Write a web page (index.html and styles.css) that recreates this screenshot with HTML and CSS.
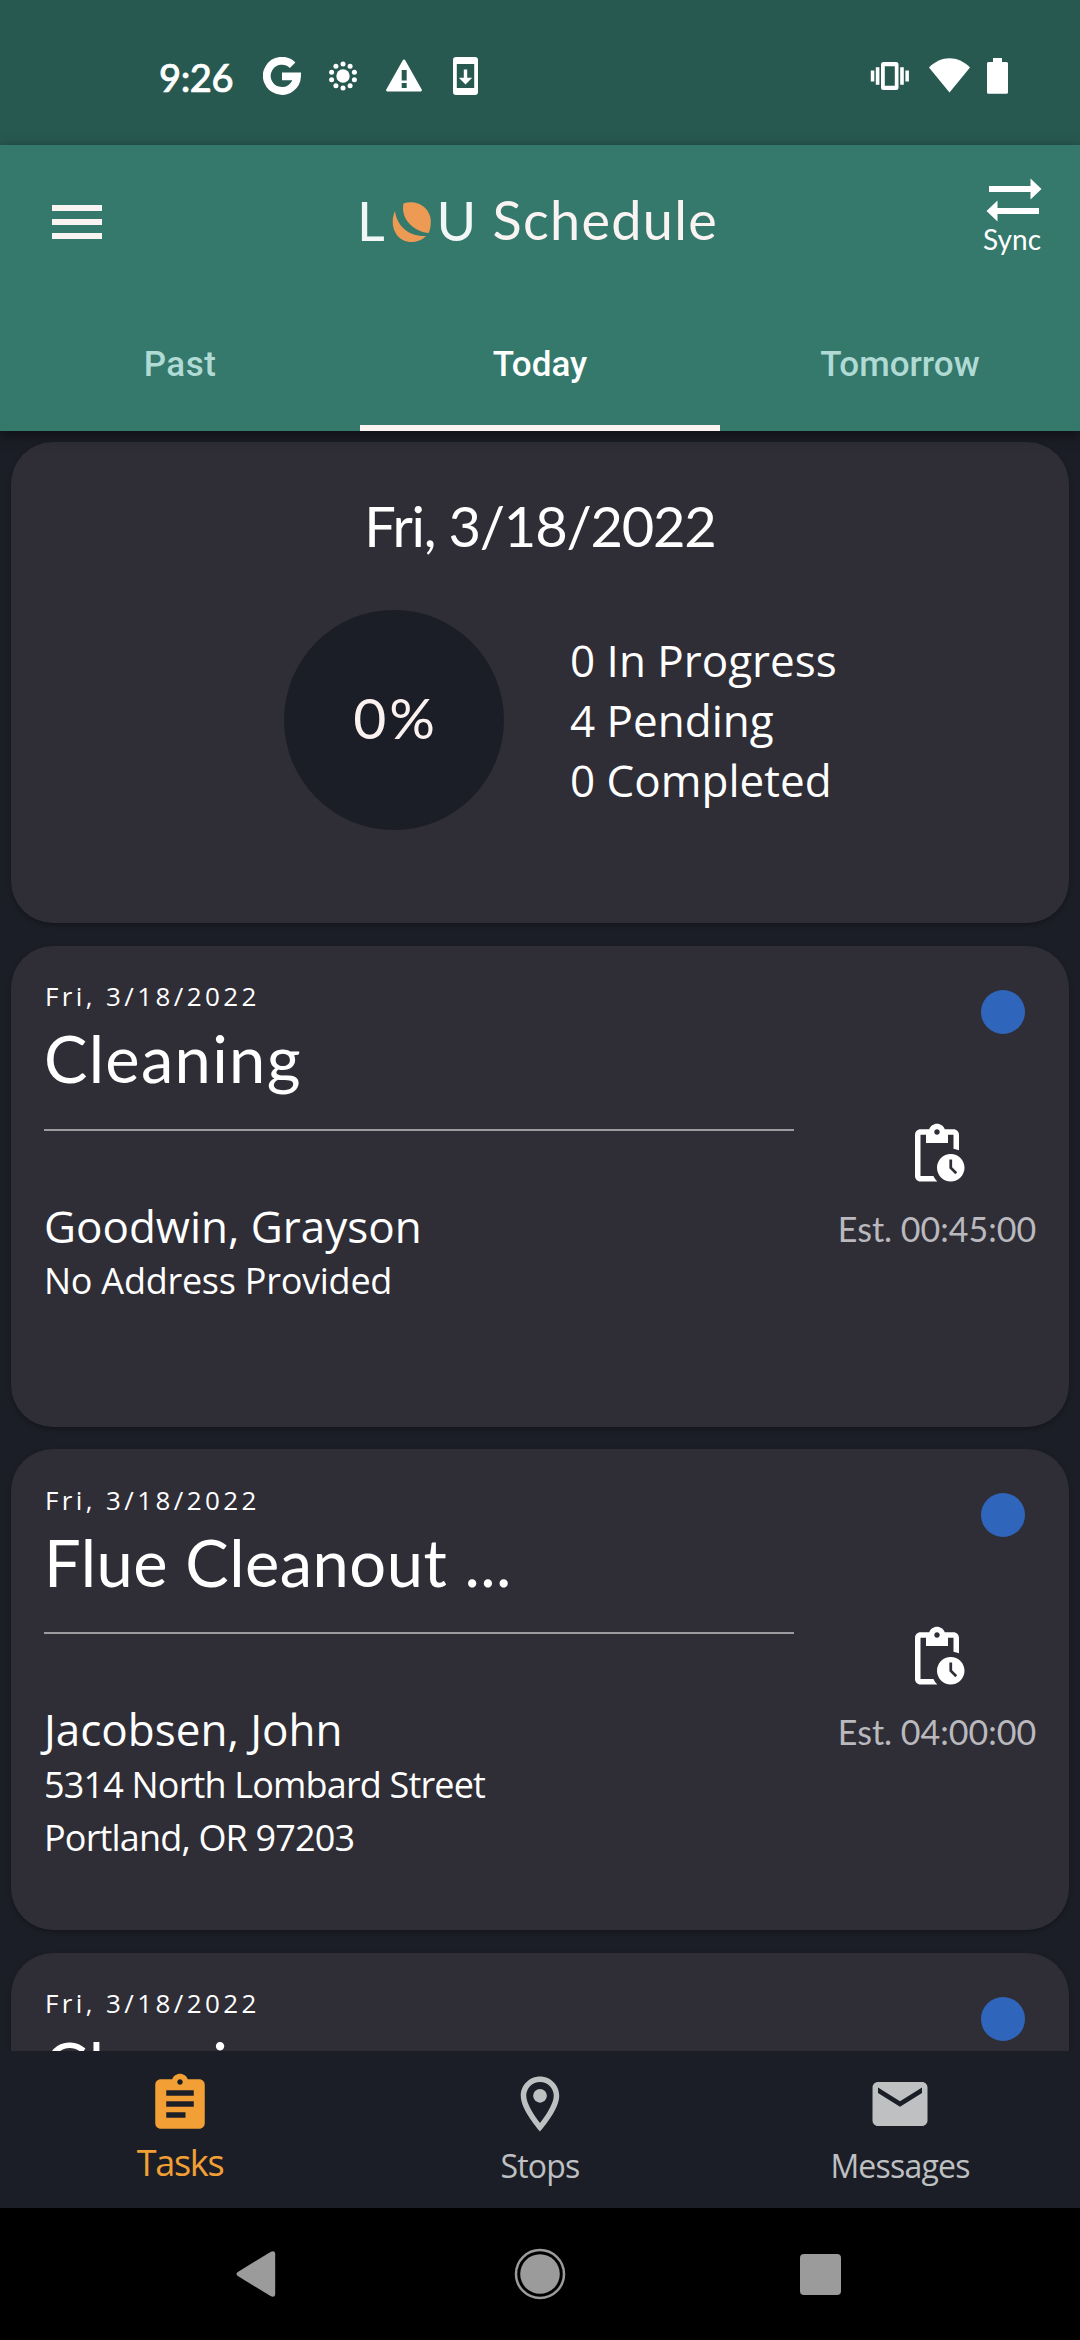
FILE: index.html
```html
<!DOCTYPE html>
<html lang="en">
<head>
<meta charset="utf-8">
<title>LOU Schedule</title>
<link rel="stylesheet" href="styles.css">
</head>
<body>
<div class="statusbar">
  <span class="clock">9:26</span>
  <svg class="st-google" width="38" height="38" viewBox="0 0 38 38"><path d="M29.600 8.200A15.100 15.100 0 1 0 34 19.300H19" fill="none" stroke="#fff" stroke-width="7.800"/></svg>
  <svg class="st-sun" width="30" height="30" viewBox="-15 -15 30 30" fill="#fff"><circle r="6.7"/><circle cy="-12" r="2.5"/><circle cx="7.1" cy="-9.7" r="2.5"/><circle cx="11.4" cy="-3.7" r="2.5"/><circle cx="11.4" cy="3.7" r="2.5"/><circle cx="7.1" cy="9.7" r="2.5"/><circle cy="12" r="2.5"/><circle cx="-7.1" cy="9.7" r="2.5"/><circle cx="-11.4" cy="3.7" r="2.5"/><circle cx="-11.4" cy="-3.7" r="2.5"/><circle cx="-7.1" cy="-9.7" r="2.5"/></svg>
  <svg class="st-warn" width="36" height="33" viewBox="0 0 36 33"><path fill="#fff" fill-rule="evenodd" d="M16.8 1.2a1.3 1.3 0 0 1 2.4 0L35.7 30.5a1.3 1.3 0 0 1-1.2 2H1.5a1.3 1.3 0 0 1-1.2-2zM15.7 11v10.5h5V11zM15.7 24v5h5v-5z"/></svg>
  <svg class="st-phone" width="25" height="38" viewBox="0 0 25 38"><path fill="#fff" fill-rule="evenodd" d="M3 0h19a3 3 0 0 1 3 3v32a3 3 0 0 1-3 3H3a3 3 0 0 1-3-3V3a3 3 0 0 1 3-3zM3.8 7v24h17.4V7zM10.8 12.5h3.4v8.3h5L12.5 27.5 5.8 20.800h5z"/></svg>
  <span class="grow"></span>
  <svg class="st-vibrate" width="40" height="30" viewBox="0 0 40 30" fill="#fff"><path fill-rule="evenodd" d="M13.500 1h12.500a2.500 2.500 0 0 1 2.500 2.500v23a2.500 2.500 0 0 1-2.500 2.500H13.500a2.500 2.500 0 0 1-2.500-2.500v-23A2.500 2.500 0 0 1 13.500 1zM14.800 5.300v19.400h10V5.300z"/><path d="M.8 9.500h3.500v11H.8zM5.800 6.300h3.600v17.400H5.800zM30.200 6.300h3.600v17.400h-3.600zM35.400 9.500h3.500v11h-3.500z"/></svg>
  <svg class="st-wifi" width="41" height="35" viewBox="0 0 41 35"><path fill="#fff" d="M0 9.600C12-2.800 29-2.800 41 9.600L20.500 34.500z"/></svg>
  <svg class="st-battery" width="21" height="36" viewBox="0 0 21 36"><path fill="#fff" d="M6 0h9v4h4.500A1.500 1.500 0 0 1 21 5.500v28.700a1.500 1.500 0 0 1-1.500 1.500h-18A1.500 1.500 0 0 1 0 34.200V5.500A1.500 1.500 0 0 1 1.500 4H6z"/></svg>
</div>

<header class="appbar">
  <div class="toolbar">
    <svg class="menu" width="50" height="34" viewBox="0 0 50 34"><path fill="#f9f3f1" d="M0 0h50v6H0zM0 14h50v6H0zM0 28h50v6H0z"/></svg>
    <div class="brand">
      <span class="logo logo-l">L</span>
      <svg class="logo-o" width="39" height="40" viewBox="0 0 39 40" fill="#ed9a54"><path d="M11.600 1.300C24-3 38.800 5 38.800 19.700 38.800 24 38 28 36.700 31 22 30 8 17 11.600 1.300z"/><path d="M3 9C-3 22 3 40 19.500 40 26 40 30.500 37.500 34 34 18 35 5 25 3 9z"/></svg>
      <span class="logo logo-u">U</span>
      <span class="heading">Schedule</span>
    </div>
    <div class="sync">
      <svg width="56" height="44" viewBox="0 0 56 44" fill="#fff"><path d="M3 8h41.500V.5L55.500 11l-11 10.500V14H3zM53 30H11.500v-7.500L.5 33l11 10.500V36H53z"/></svg>
      <span class="sync-label">Sync</span>
    </div>
  </div>
  <nav class="tabs">
    <span class="tab tab-past">Past</span>
    <span class="tab tab-active">Today</span>
    <span class="tab">Tomorrow</span>
  </nav>
</header>

<main class="feed">
  <section class="card summary">
    <h1 class="summary-date">Fri, 3/18/2022</h1>
    <div class="summary-row">
      <div class="ring"><span class="pct">0%</span></div>
      <div class="counts"><div>0 In Progress</div><div>4 Pending</div><div>0 Completed</div></div>
    </div>
  </section>

  <article class="card task">
    <div class="info">
      <div class="date">Fri, 3/18/2022</div>
      <h2 class="title">Cleaning</h2>
      <div class="name">Goodwin, Grayson</div>
      <div class="addr addr-none">No Address Provided</div>
    </div>
    <div class="side">
      <span class="dot"></span>
      <svg class="pending" width="66" height="66" viewBox="0 0 24 24" fill="#fff"><path d="M17 12c-2.760 0-5 2.240-5 5s2.240 5 5 5 5-2.240 5-5-2.240-5-5-5zm1.650 7.350L16.500 17.200V14h1v2.790l1.850 1.850-.7.710zM18 3h-3.180C14.400 1.840 13.300 1 12 1s-2.400.84-2.820 2H6c-1.100 0-2 .9-2 2v15c0 1.100.9 2 2 2h6.110c-.59-.57-1.070-1.250-1.420-2H6V5h2v3h8V5h2v5.080c.71.100 1.380.310 2 .600V5c0-1.100-.9-2-2-2zm-6 2c-.55 0-1-.45-1-1s.45-1 1-1 1 .45 1 1-.45 1-1 1z"/></svg>
      <span class="est">Est. 00:45:00</span>
    </div>
  </article>

  <article class="card task">
    <div class="info">
      <div class="date">Fri, 3/18/2022</div>
      <h2 class="title title-long">Flue Cleanout ...</h2>
      <div class="name">Jacobsen, John</div>
      <div class="addr">5314 North Lombard Street</div>
      <div class="addr">Portland, OR 97203</div>
    </div>
    <div class="side">
      <span class="dot"></span>
      <svg class="pending" width="66" height="66" viewBox="0 0 24 24" fill="#fff"><path d="M17 12c-2.760 0-5 2.240-5 5s2.240 5 5 5 5-2.240 5-5-2.240-5-5-5zm1.650 7.350L16.500 17.200V14h1v2.790l1.850 1.850-.7.710zM18 3h-3.180C14.400 1.840 13.300 1 12 1s-2.400.84-2.820 2H6c-1.100 0-2 .9-2 2v15c0 1.100.9 2 2 2h6.110c-.59-.57-1.070-1.250-1.420-2H6V5h2v3h8V5h2v5.080c.71.100 1.380.310 2 .600V5c0-1.100-.9-2-2-2zm-6 2c-.55 0-1-.45-1-1s.45-1 1-1 1 .45 1 1-.45 1-1 1z"/></svg>
      <span class="est">Est. 04:00:00</span>
    </div>
  </article>

  <article class="card task">
    <div class="info">
      <div class="date">Fri, 3/18/2022</div>
      <h2 class="title">Cleaning</h2>
    </div>
    <div class="side"><span class="dot"></span></div>
  </article>
</main>

<nav class="bottomnav">
  <div class="item item-active">
    <svg width="66" height="66" viewBox="0 0 24 24" fill="#f2a035"><path d="M19 3h-4.180C14.400 1.840 13.300 1 12 1c-1.300 0-2.400.84-2.820 2H5c-1.100 0-2 .9-2 2v14c0 1.100.9 2 2 2h14c1.100 0 2-.9 2-2V5c0-1.100-.9-2-2-2zm-7 0c.55 0 1 .45 1 1s-.45 1-1 1-1-.45-1-1 .45-1 1-1zm2 14H7v-2h7v2zm3-4H7v-2h10v2zm0-4H7V7h10v2z"/></svg>
    <span class="lbl">Tasks</span>
  </div>
  <div class="item">
    <svg width="66" height="66" viewBox="0 0 24 24" fill="#bfc0c2"><path d="M12 2C8.130 2 5 5.130 5 9c0 5.250 7 13 7 13s7-7.750 7-13c0-3.870-3.130-7-7-7zM7 9c0-2.760 2.240-5 5-5s5 2.240 5 5c0 2.880-2.880 7.190-5 9.880C9.920 16.210 7 11.850 7 9z"/><circle cx="12" cy="9" r="2.500"/></svg>
    <span class="lbl">Stops</span>
  </div>
  <div class="item">
    <svg width="66" height="66" viewBox="0 0 24 24" fill="#bfc0c2"><path d="M20 4H4c-1.100 0-1.990.9-1.990 2L2 18c0 1.100.9 2 2 2h16c1.100 0 2-.9 2-2V6c0-1.100-.9-2-2-2zm0 4l-8 5-8-5V6l8 5 8-5v2z"/></svg>
    <span class="lbl">Messages</span>
  </div>
</nav>

<div class="sysnav">
  <svg class="back" width="40" height="46" viewBox="0 0 40 46"><path fill="#9b9b9b" d="M34.500 1C37.500-.6 39.200.6 39.200 3v40c0 2.400-1.700 3.600-4.700 2L1.800 25c-1.800-1.200-1.800-2.800 0-4z"/></svg>
  <svg class="home" width="52" height="52" viewBox="-26 -26 52 52"><circle r="24" fill="none" stroke="#9b9b9b" stroke-width="2.500"/><circle r="19.800" fill="#9b9b9b"/></svg>
  <svg class="recent" width="41" height="41" viewBox="0 0 41 41"><rect width="41" height="41" rx="4" fill="#9b9b9b"/></svg>
</div>
</body>
</html>
```
FILE: styles.css
```css
* { box-sizing: border-box; }
body { margin: 0; width: 1080px; height: 2340px; overflow: hidden; display: flex; flex-direction: column; background: #1c1e27; color: #fff; font-family: "Open Sans", sans-serif; white-space: nowrap; }
svg { display: block; flex: none; }
h1, h2 { margin: 0; font-weight: 400; }
.grow { flex: 1; }

.statusbar { flex: none; height: 145px; padding: 6px 72px 0 159px; display: flex; align-items: center; background: #285951; }
.clock { width: 104px; font: 500 38px/44px Lato, sans-serif; letter-spacing: -.4px; margin-top: 3px; -webkit-text-stroke: .7px #fff; }
.st-sun { margin-left: 27px; }
.st-warn { margin-left: 28px; }
.st-phone { margin-left: 31px; }
.st-wifi { margin-left: 19px; }
.st-battery { margin-left: 17px; }

.appbar { flex: none; height: 286px; position: relative; z-index: 1; background: #35786c; box-shadow: 0 4px 12px rgba(0, 0, 0, .5); }
.toolbar { height: 154px; padding: 0 38px 0 52px; display: flex; align-items: center; }
.brand { margin-left: 254px; display: flex; align-items: center; font: 54px/60px Lato, sans-serif; color: #f9f3f1; }
.logo { margin-top: -2px; color: #f0f7f6; }
.logo-l { width: 36px; padding-left: 1px; }
.logo-u { width: 56px; margin-left: 5.500px; }
.heading { margin-top: -4px; letter-spacing: 1.300px; }
.sync { margin: -10px 0 0 auto; display: flex; flex-direction: column; align-items: flex-end; }
.sync-label { margin-right: 1px; font: 28px/34px Lato, sans-serif; }
.tabs { height: 132px; display: grid; grid-template-columns: repeat(3, 1fr); }
.tab { display: flex; align-items: center; justify-content: center; font: 500 35px/40px Roboto, sans-serif; color: #b0dad4; }
.tab-past { letter-spacing: .5px; }
.tab-active { padding-top: 6px; color: #fff; border-bottom: 6px solid #fbf4f1; }

.feed { flex: 1; min-height: 0; overflow: hidden; padding: 11px 11px 0; display: flex; flex-direction: column; gap: 22.500px; }
.card { flex: none; height: 481px; border-radius: 42px; background: #2f2e37; box-shadow: 0 2px 4px rgba(0, 0, 0, .3); }
.summary { padding-top: 51px; }
.summary-date { text-align: center; font: 56px/66px Lato, sans-serif; letter-spacing: -1.200px; }
.summary-row { display: flex; align-items: center; margin: 51px 0 0 273px; gap: 66px; }
.ring { width: 220px; height: 220px; border-radius: 50%; background: #1c1e27; display: flex; align-items: center; justify-content: center; }
.pct { margin: -6px -3px 0 0; font: 57px/66px Lato, sans-serif; letter-spacing: 3px; color: #fbf1ee; }
.counts { margin-top: -1px; font-size: 44px; line-height: 60px; }

.task { display: flex; padding-left: 33px; }
.info { width: 750px; }
.date { margin: 34.500px 0 0 1px; font: 26px/32px "Open Sans", sans-serif; letter-spacing: 3.400px; }
.title { height: 118.500px; border-bottom: 2px solid #9c9ca0; font: 65px/92px Lato, sans-serif; letter-spacing: 1.300px; }
.title-long { letter-spacing: .5px; }
.name { margin-top: 64px; font-size: 44px; line-height: 62px; }
.addr { font-size: 36px; line-height: 53px; letter-spacing: -.83px; }
.addr-none { letter-spacing: -.25px; }
.name + .addr { margin-top: -2.500px; }
.side { width: 206px; margin-left: 40px; display: flex; flex-direction: column; align-items: center; }
.dot { width: 44px; height: 44px; border-radius: 50%; background: #2f65bb; align-self: flex-end; margin: 44px 15px 0 0; }
.pending { margin-top: 87px; }
.est { margin-top: 19px; font: 34px/46px Lato, sans-serif; color: #b9b9be; }

.bottomnav { flex: none; height: 157px; padding-top: 20px; display: grid; grid-template-columns: repeat(3, 1fr); background: #1c1e27; color: #bfc0c2; }
.item { display: flex; flex-direction: column; align-items: center; }
.lbl { padding-top: 5px; font-size: 32px; line-height: 48px; letter-spacing: -.8px; }
.item-active .lbl { padding-top: 2px; color: #f2a035; font-size: 36px; letter-spacing: -1.300px; }

.sysnav { flex: none; height: 132px; background: #000; display: flex; align-items: center; }
.back { margin-left: 236px; }
.home { margin-left: 238px; }
.recent { margin-left: 234px; }
```
